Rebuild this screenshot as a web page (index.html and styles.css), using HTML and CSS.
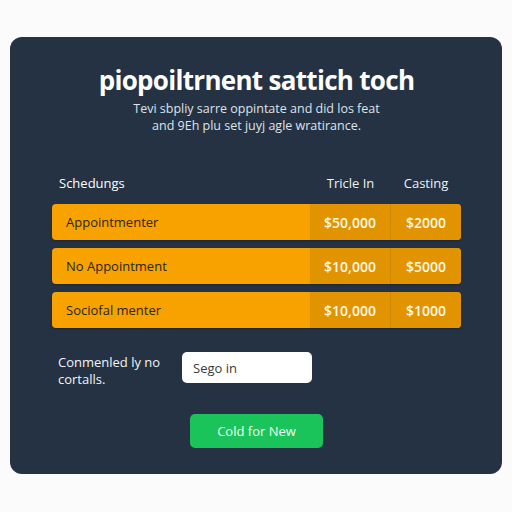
FILE: index.html
```html
<!DOCTYPE html>
<html lang="en">
<head>
  <meta charset="UTF-8">
  <meta name="viewport" content="width=device-width, initial-scale=1.0">
  <title>Appointment Schedule</title>
  <link rel="stylesheet" href="styles.css">
</head>
<body>
  <div class="card">
    <h1 class="title">piopoiltrnent sattich toch</h1>
    <p class="subtitle">Tevi sbpliy sarre oppintate and did los feat<br>and 9Eh plu set juyj agle wratirance.</p>

    <!-- tabla de citas -->
    <div class="table">
      <div class="head">
        <span class="name">Schedungs</span>
        <span class="val">Tricle In</span>
        <span class="val2">Casting</span>
      </div>
      <div class="row">
        <span class="name">Appointmenter</span>
        <span class="val">$50,000</span>
        <span class="val2">$2000</span>
      </div>
      <div class="row">
        <span class="name">No Appointment</span>
        <span class="val">$10,000</span>
        <span class="val2">$5000</span>
      </div>
      <div class="row">
        <span class="name">Sociofal menter</span>
        <span class="val">$10,000</span>
        <span class="val2">$1000</span>
      </div>
    </div>

    <div class="bottom">
      <p class="note">Conmenled ly no<br>cortalls.</p>
      <input type="text" class="field" placeholder="Sego in">
    </div>

    <div class="actions">
      <button class="btn">Cold for New</button>
    </div>
  </div>
</body>
</html>
```

FILE: styles.css
```css
body {
  margin: 0;
  background: #fbfbfc;
  font-family: "Open Sans", Arial, sans-serif;
}

.card {
  margin: 37px 10px 0 10px;
  height: 437px;
  box-sizing: border-box;
  background: #243244;
  border-radius: 12px;
  padding: 27px 41px 0 42px;
  color: #fff;
}

.title {
  margin: 0;
  font-size: 26px;
  line-height: 32px;
  font-weight: 700;
  text-align: center;
  letter-spacing: -0.7px;
}

.subtitle {
  margin: 4px 0 0 0;
  font-size: 12.5px;
  line-height: 17px;
  text-align: center;
  color: #dfe3e8;
}

/* tabla */
.table {
  margin-top: 41px;
  display: flex;
  flex-direction: column;
  gap: 8px;
}

.head, .row {
  display: grid;
  grid-template-columns: 258px 81px 70px;
  align-items: center;
}

.head {
  font-size: 13px;
  line-height: 16px;
  margin-bottom: 5px;
}

.head .name {
  padding-left: 7px;
}

.head .val, .head .val2 {
  text-align: center;
  color: #eef1f4;
}

.row {
  height: 36px;
  background: #f8a200;
  border-radius: 4px;
  overflow: hidden;
  box-shadow: 0 1px 2px rgba(0, 0, 0, 0.25);
}

.row span {
  height: 100%;
  display: flex;
  align-items: center;
}

.row .name {
  padding-left: 14px;
  font-size: 13px;
  color: #2b2418;
}

.row .val, .row .val2 {
  justify-content: center;
  background: #e29400;
  font-size: 14px;
  font-weight: 600;
  color: #fff8ea;
}

.row .val {
  border-right: 1px solid #cf8700;
}

/* parte de abajo */
.bottom {
  margin-top: 24px;
  display: flex;
  align-items: flex-start;
  padding-left: 6px;
}

.note {
  margin: 2px 0 0 0;
  width: 124px;
  font-size: 13px;
  line-height: 17px;
  color: #f2f4f6;
}

.field {
  width: 130px;
  height: 31px;
  box-sizing: border-box;
  border: none;
  border-radius: 5px;
  padding: 0 11px;
  font-family: "Open Sans", Arial, sans-serif;
  font-size: 13px;
}

.field::placeholder {
  color: #3a3a3a;
}

.actions {
  margin-top: 26px;
  display: flex;
  justify-content: center;
}

.btn {
  width: 133px;
  height: 34px;
  border: none;
  border-radius: 5px;
  background: #1bc45a;
  color: #effff4;
  font-family: "Open Sans", Arial, sans-serif;
  font-size: 13px;
  cursor: pointer;
}
```
